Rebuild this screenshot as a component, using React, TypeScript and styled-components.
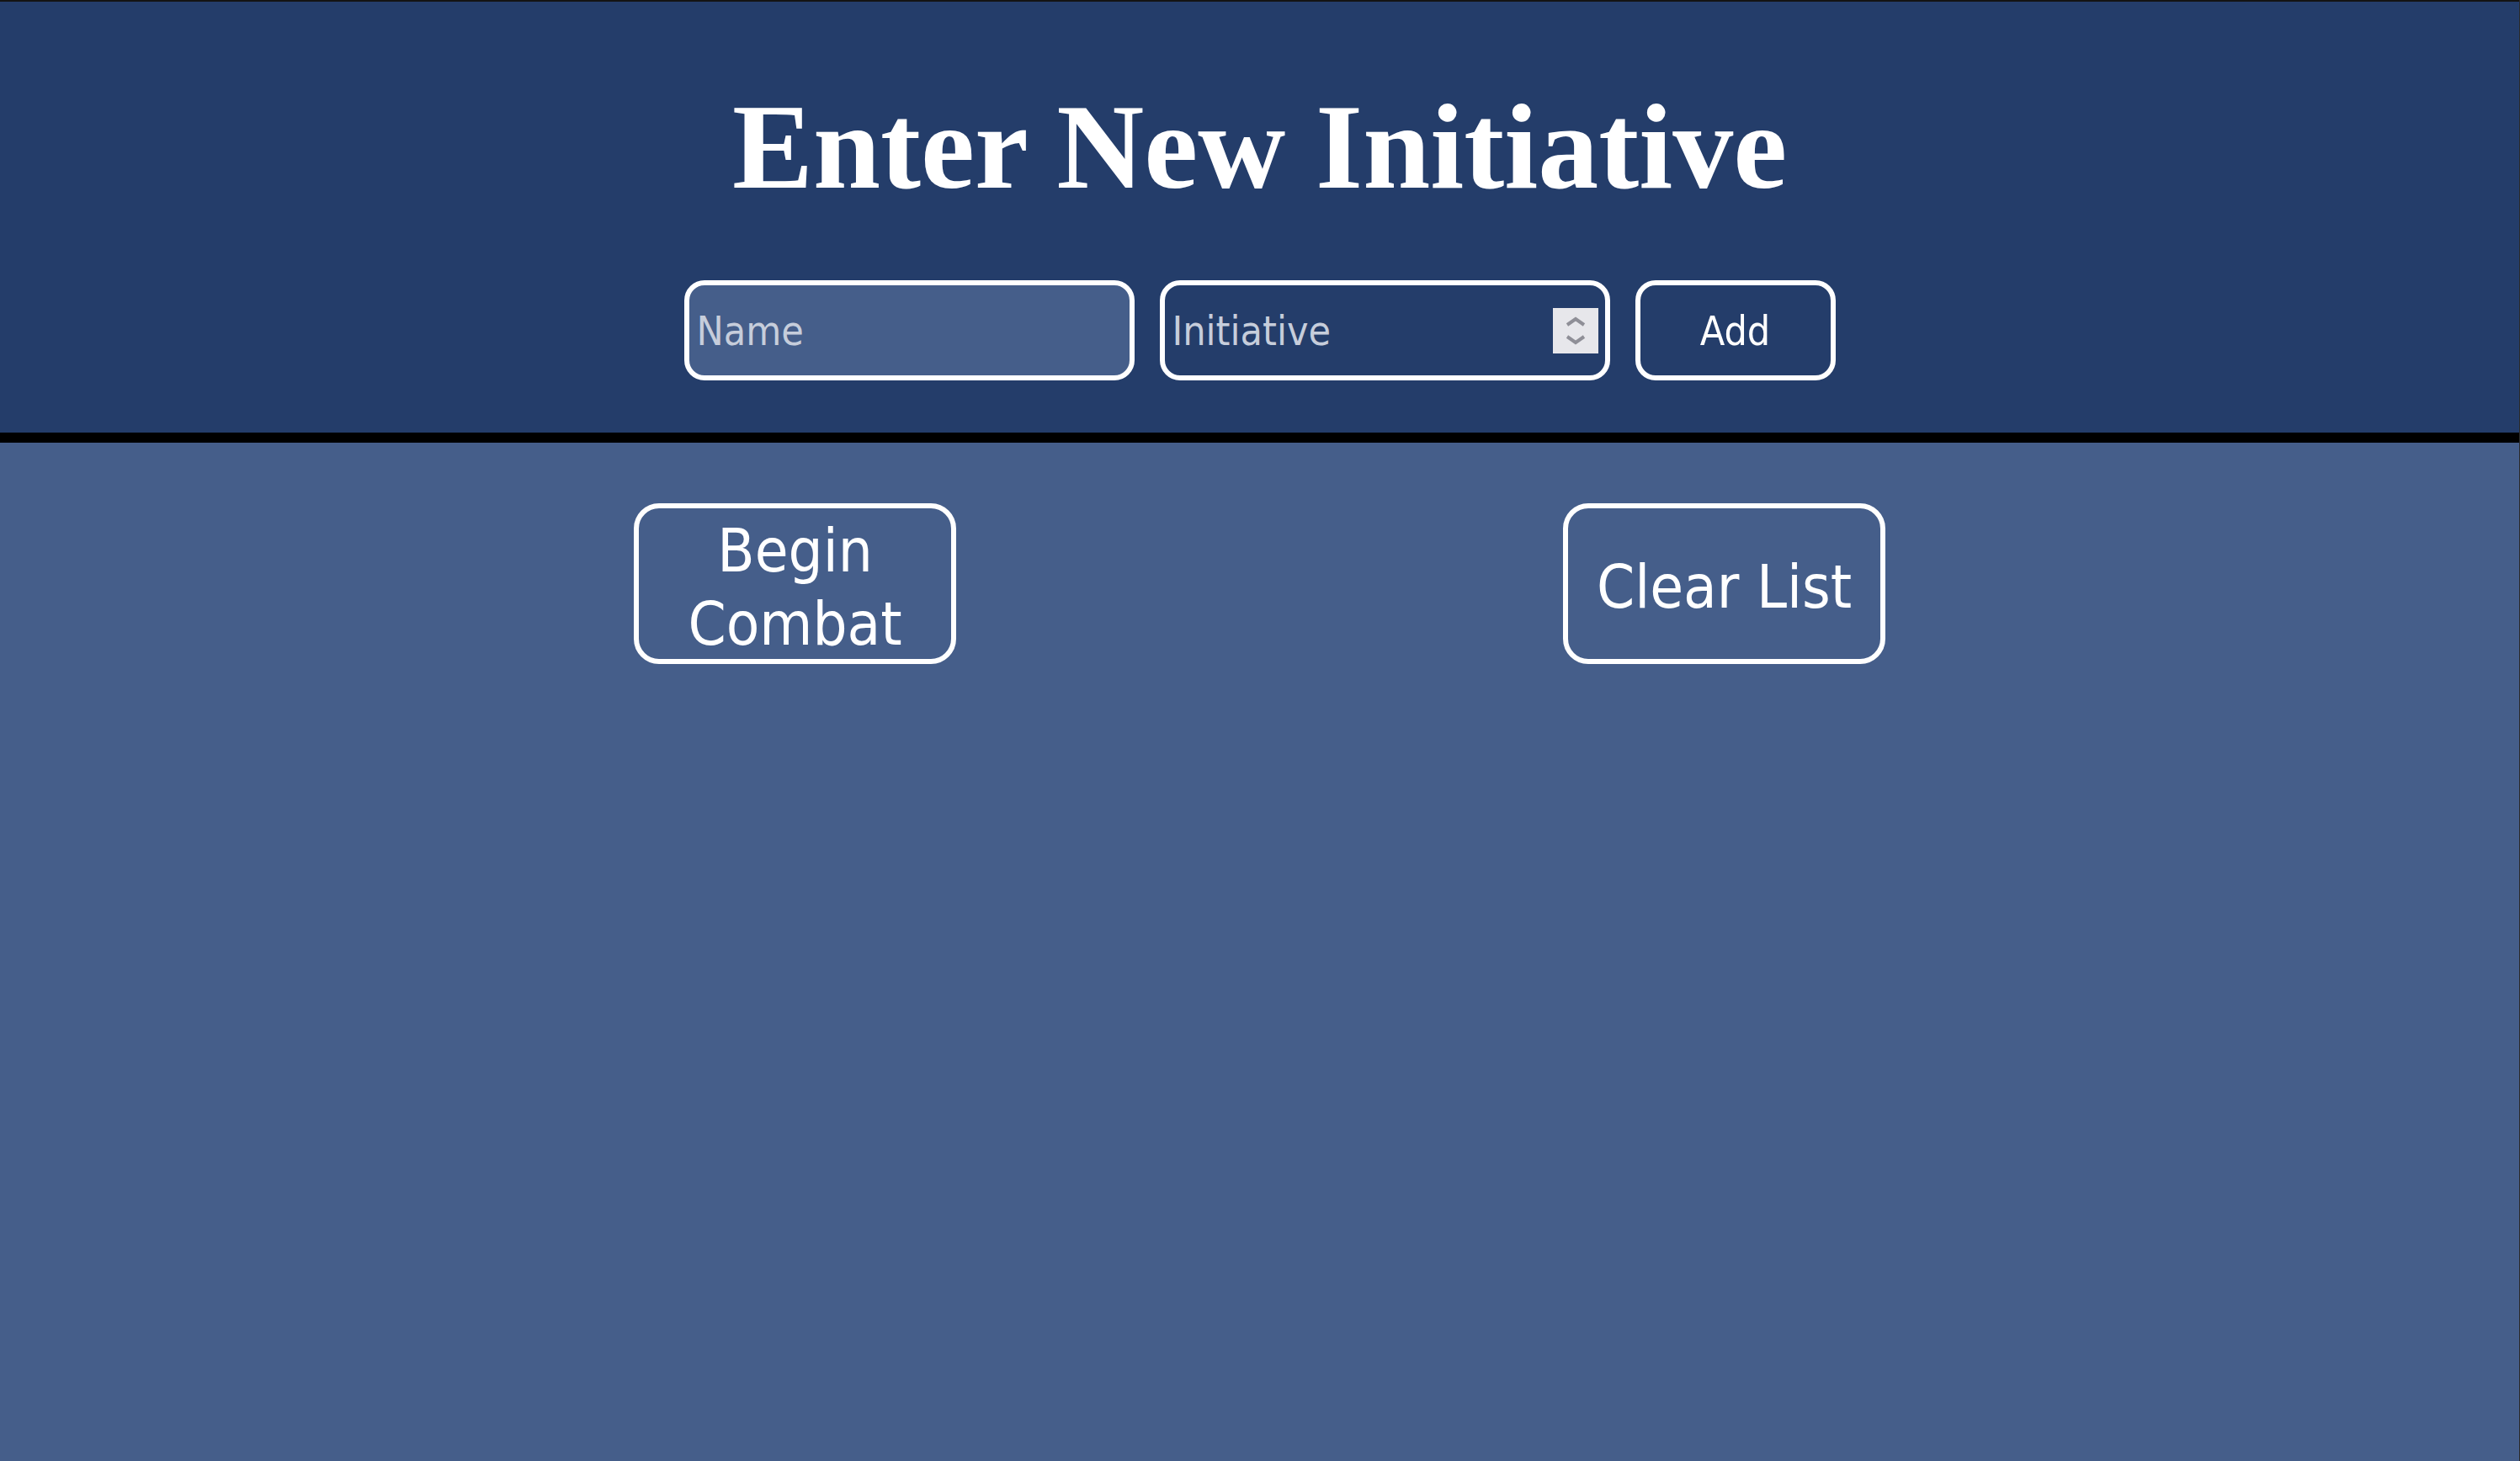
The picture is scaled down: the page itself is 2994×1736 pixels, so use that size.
import styled, { createGlobalStyle } from 'styled-components';

const GlobalStyle = createGlobalStyle`
  html, body {
    margin: 0;
    padding: 0;
  }
  body {
    background-color: #455e8a;
    font-family: "DejaVu Sans Condensed", "DejaVu Sans", "Liberation Sans", sans-serif;
    font-stretch: semi-condensed;
  }
`;

const Page = styled.div`
  min-height: 100vh;
  box-sizing: border-box;
  background-color: #455e8a;
  border-right: 1px solid #2b2b2b;
`;

const Header = styled.header`
  display: flex;
  flex-direction: column;
  align-items: center;
  gap: 87px;
  padding: 102px 0 62px;
  background-color: #243d6a;
  border-top: 2px solid #141414;
  border-bottom: 12px solid #000;
`;

const Title = styled.h1`
  margin: 0;
  font-family: "Liberation Serif", "Times New Roman", serif;
  font-weight: bold;
  font-size: 144px;
  line-height: 142px;
  color: #fff;
`;

const EntryForm = styled.div`
  display: flex;
  gap: 30px;
`;

const fieldFrame = `
  box-sizing: border-box;
  height: 119px;
  border: 6px solid #fff;
  border-radius: 24px;
  color: #fff;
  font-family: inherit;
  font-stretch: semi-condensed;
  font-size: 48px;
`;

const NameInput = styled.input<{ $lit?: boolean }>`
  ${fieldFrame}
  width: 535px;
  padding: 0 9px;
  outline: none;
  background-color: ${({ $lit }) => ($lit ? '#455e8a' : '#243d6a')};
  caret-color: #fff;

  &::placeholder {
    color: #c6cddb;
  }
`;

const NumberField = styled.div`
  ${fieldFrame}
  width: 535px;
  display: flex;
  align-items: center;
  padding: 0 8px 0 9px;
  background-color: #243d6a;
`;

const NumberInput = styled.input`
  flex: 1;
  min-width: 0;
  border: none;
  outline: none;
  padding: 0;
  background: transparent;
  color: #fff;
  font-family: inherit;
  font-stretch: semi-condensed;
  font-size: 48px;

  &::placeholder {
    color: #c6cddb;
  }
`;

const Spinner = styled.span`
  display: flex;
  width: 54px;
  height: 54px;
  background-color: #e7e7eb;
`;

const AddButton = styled.button`
  ${fieldFrame}
  width: 238px;
  background-color: transparent;
  cursor: pointer;
`;

const Controls = styled.main`
  display: flex;
  justify-content: center;
  gap: 721px;
  padding-top: 72px;
`;

const BigButton = styled.button`
  box-sizing: border-box;
  width: 383px;
  height: 191px;
  padding: 8px 20px 0;
  display: flex;
  align-items: center;
  justify-content: center;
  border: 6px solid #fff;
  border-radius: 30px;
  background-color: transparent;
  color: #fff;
  font-family: inherit;
  font-stretch: semi-condensed;
  font-size: 72px;
  line-height: 87px;
  text-align: center;
  cursor: pointer;
`;

const SpinnerIcon = () => (
  <svg width="54" height="54" viewBox="0 0 54 54" fill="none">
    <polyline points="17,20 27,13 37,20" stroke="#8f8f97" strokeWidth="4" />
    <polyline points="17,34 27,41 37,34" stroke="#8f8f97" strokeWidth="4" />
  </svg>
);

export default function App() {
  return (
    <>
      <GlobalStyle />
      <Page>
        <Header>
          <Title>Enter New Initiative</Title>
          <EntryForm>
            <NameInput $lit placeholder="Name" autoFocus />
            <NumberField>
              <NumberInput type="text" placeholder="Initiative" />
              <Spinner>
                <SpinnerIcon />
              </Spinner>
            </NumberField>
            <AddButton>Add</AddButton>
          </EntryForm>
        </Header>
        <Controls>
          <BigButton>Begin Combat</BigButton>
          <BigButton>Clear List</BigButton>
        </Controls>
      </Page>
    </>
  );
}
